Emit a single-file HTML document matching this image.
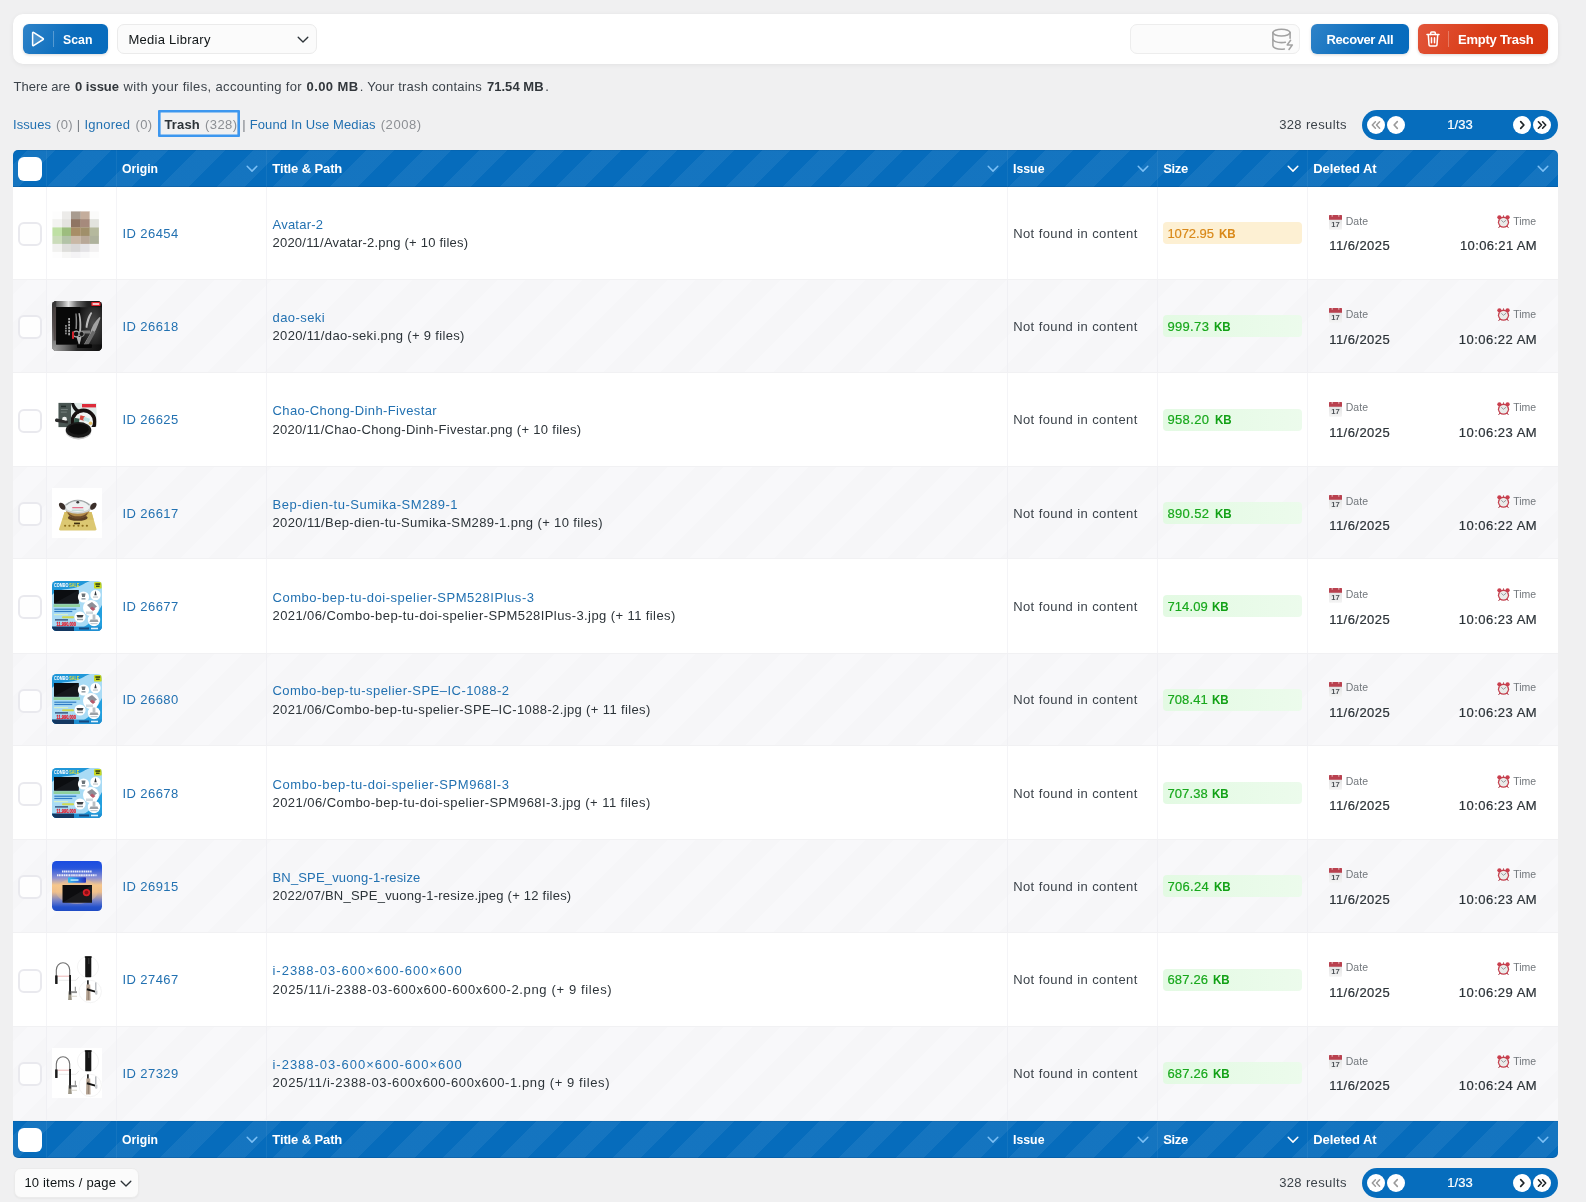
<!DOCTYPE html>
<html lang="en"><head><meta charset="utf-8"><title>Media Cleaner – Trash</title>
<style>
*{box-sizing:border-box;margin:0;padding:0}
html,body{width:1586px;height:1202px;overflow:hidden}
body{background:#f0f0f1;font-family:"Liberation Sans",sans-serif;font-size:13px;color:#3c434a;position:relative}
#root{position:absolute;left:0;top:0;width:1586px;height:1202px;will-change:transform}
i{font-style:normal;display:block;position:absolute}
.t{position:absolute;white-space:pre;z-index:3}
.b,.t b{font-weight:bold}
.m{font-weight:normal;-webkit-text-stroke:.22px currentColor}
.w{color:#fff}
.blk{color:#101517}
.lnk{color:#2271b1}
.mut{color:#8c8f94}
.pipe{color:#7a7f85}
.dk{color:#2c3338}
.dk2{color:#3c434a}
.dk3{color:#32373c}
.lab{color:#72777c}
.ot{color:#d9891a}
.gt{color:#18a81c;-webkit-text-stroke:.18px currentColor}
.b.gt{color:#12a116;-webkit-text-stroke:0}
.ot{-webkit-text-stroke:.18px currentColor}
.b.ot{-webkit-text-stroke:0}
.card{position:absolute;left:13px;top:14px;width:1545px;height:50px;background:#fff;border-radius:10px;box-shadow:0 1px 5px rgba(0,0,0,.06),0 0 2px rgba(0,0,0,.03)}
.btn{position:absolute;top:24px;height:30px;border-radius:6px;box-shadow:0 1px 3px rgba(0,0,0,.15)}
.scan{left:23px;width:85px;background:linear-gradient(120deg,#2f83c8 0%,#0b6dbd 55%,#066bbd 100%)}
.play{position:absolute;left:8px;top:7px}
.sep{top:7px;width:1px;height:16px;background:rgba(255,255,255,.28)}
.recover{left:1311px;width:98px;background:linear-gradient(120deg,#2f83c8 0%,#0b6dbd 55%,#066bbd 100%)}
.empty{left:1418px;width:130px;background:linear-gradient(120deg,#e2553a 0%,#d93c17 50%,#d6350f 100%)}
.select{position:absolute;left:117px;top:24px;width:200px;height:30px;border-radius:7px;background:#fbfbfb;border:1px solid #ebebeb}
.search{position:absolute;left:1130px;top:24px;width:170px;height:30px;border-radius:7px;background:#fbfbfb;border:1px solid #ededed}
.focus{position:absolute;left:157.500px;top:109.700px;width:82.700px;height:27.400px;box-shadow:inset 0 0 0 2.600px #3d97ef;border-radius:1px}
.pager{position:absolute;left:1362px;width:196px;height:30px;border-radius:15px;background:#066dbd}
.pager .c{top:6px;width:18px;height:18px;border-radius:9px;background:#fff}
.thead{position:absolute;z-index:2;left:13px;width:1545px;height:37px;border-radius:5px 5px 0 0;background-color:#066cbc;background-image:repeating-linear-gradient(135deg,rgba(255,255,255,0) 0,rgba(255,255,255,0) 10px,rgba(255,255,255,.058) 10px,rgba(255,255,255,.058) 30px,rgba(255,255,255,0) 30px,rgba(255,255,255,0) 40px);overflow:hidden;box-shadow:inset 0 -1px 0 rgba(0,40,90,.18),inset 0 1px 0 rgba(0,40,90,.10)}
.thead.foot{border-radius:0 0 5px 5px}
.hcb{left:5px;top:7px;width:24px;height:24px;border-radius:6px;background:#fff}
.vs{top:0;width:1px;height:37px;background:rgba(255,255,255,.055)}
.row{position:absolute;left:13px;width:1545px;height:93.4px;background:#fff;
 background-image:linear-gradient(#f4f4f7,#f4f4f7),linear-gradient(#f4f4f7,#f4f4f7),linear-gradient(#f4f4f7,#f4f4f7),linear-gradient(#f4f4f7,#f4f4f7),linear-gradient(#f4f4f7,#f4f4f7),linear-gradient(#f4f4f7,#f4f4f7);
 background-size:1px 100%;background-repeat:no-repeat;background-position:33px 0,103px 0,253px 0,994px 0,1144px 0,1294px 0}
.row.last{height:95px}
.row.alt{background-color:#f6f6f8;
 background-image:linear-gradient(#f0f0f4,#f0f0f4),linear-gradient(#f0f0f4,#f0f0f4),linear-gradient(#f0f0f4,#f0f0f4),linear-gradient(#f0f0f4,#f0f0f4),linear-gradient(#f0f0f4,#f0f0f4),linear-gradient(#f0f0f4,#f0f0f4),repeating-linear-gradient(135deg,rgba(255,255,255,.22) 0,rgba(255,255,255,.22) 20px,rgba(255,255,255,0) 20px,rgba(255,255,255,0) 40px);
 background-size:1px 100%,1px 100%,1px 100%,1px 100%,1px 100%,1px 100%,auto;background-repeat:no-repeat,no-repeat,no-repeat,no-repeat,no-repeat,no-repeat,repeat;
 box-shadow:inset 0 1px 0 #f1f1f3,inset 0 -1px 0 #f1f1f3}
.cb{left:5px;top:36px;width:24px;height:24px;border-radius:6px;background:#fefefe;border:2px solid #e9e9ee}
.th{position:absolute;left:39px;top:21.8px;width:50px;height:50px;display:block}
.th svg{display:block}
.badge{left:1150px;top:36px;width:139px;height:22px;border-radius:4px}
.badge.o{background:#fdf0d3}
.badge.g{background:linear-gradient(90deg,#e3fae3,#ecfbec)}
.ico{position:absolute;display:block;width:13px}
.ico svg{display:block}
.cal{left:1316px;top:29px}
.clk{left:1484px;top:29px}
.pp{position:absolute;left:13.500px;top:1168px;width:125.500px;height:30px;border-radius:7px;background:#fbfbfb;border:1px solid #ebebeb;box-shadow:0 1px 2px rgba(0,0,0,.04)}
</style></head>
<body>
<div id="root">
<svg width="0" height="0" style="position:absolute"><defs><linearGradient id="cg" x1="0" y1="0" x2="0" y2="1"><stop offset="0" stop-color="#dcdcdc"/><stop offset="1" stop-color="#f4f4f4"/></linearGradient></defs></svg>
<div class="card"></div>
<div class="btn scan"><svg class="play" width="14" height="16" viewBox="0 0 14 16"><path d="M1.6 1.9v12.2c0 .5.5.8.9.5l9.6-6.1c.4-.2.4-.8 0-1L2.5 1.4c-.4-.3-.9 0-.9.5z" fill="rgba(255,255,255,.18)" stroke="#fff" stroke-width="1.5" stroke-linejoin="round"/></svg><i class="sep" style="left:30px"></i></div>
<div class="select"><svg width="12" height="8" viewBox="0 0 12 8" style="position:absolute;left:179px;top:11px"><path d="M1.2 1.3L6 6.1l4.8-4.8" fill="none" stroke="#2c3338" stroke-width="1.35" stroke-linecap="round" stroke-linejoin="round"/></svg></div>
<div class="search"><svg width="24" height="23" viewBox="0 0 24 23" style="position:absolute;left:140px;top:2.5px"><g fill="none" stroke="#a2a2a2" stroke-width="1.55" stroke-linecap="round" stroke-linejoin="round"><ellipse cx="10.5" cy="4.6" rx="8.6" ry="3.4"/><path d="M1.9 4.6v13.2c0 1.9 3.8 3.4 8.6 3.4 1 0 2-.1 2.900-.2"/><path d="M19.100 4.600v5.600"/><path d="M1.9 11.200c0 1.900 3.800 3.400 8.600 3.400 1.400 0 2.700-.1 3.900-.4"/><path d="M19.600 12.300l-3.400 4.600h5.200l-3.400 4.600"/></g></svg></div>
<div class="btn recover"></div>
<div class="btn empty"><svg width="14" height="16" viewBox="0 0 14 16" style="position:absolute;left:8px;top:7px"><g fill="none" stroke="#fff" stroke-width="1.5" stroke-linecap="round" stroke-linejoin="round"><path d="M1 3.600h12"/><path d="M4.700 3.400V1.900c0-.6.400-1 1-1h2.600c.6 0 1 .4 1 1v1.500"/><path d="M2.300 3.800l.7 10c0 .700.600 1.200 1.300 1.200h5.400c.700 0 1.300-.5 1.300-1.200l.7-10"/><path d="M5.500 6.800v5M8.500 6.800v5"/></g></svg><i class="sep" style="left:30px"></i></div>
<div class="focus"></div>
<div class="pager" style="top:110px"><i class="c" style="left:5px"><svg width="18" height="18" viewBox="0 0 18 18"><path d="M8.400 5.800L5.300 9l3.100 3.200M12.600 5.800L9.500 9l3.100 3.200" fill="none" stroke="#9a9a9a" stroke-width="1.500" stroke-linecap="round" stroke-linejoin="round"/></svg></i><i class="c" style="left:25px"><svg width="18" height="18" viewBox="0 0 18 18"><path d="M10.300 5.600L7.100 9l3.200 3.400" fill="none" stroke="#9a9a9a" stroke-width="1.600" stroke-linecap="round" stroke-linejoin="round"/></svg></i><i class="c" style="left:151px"><svg width="18" height="18" viewBox="0 0 18 18"><path d="M7.700 5.600L10.900 9l-3.200 3.400" fill="none" stroke="#1d2327" stroke-width="1.700" stroke-linecap="round" stroke-linejoin="round"/></svg></i><i class="c" style="left:171px"><svg width="18" height="18" viewBox="0 0 18 18"><path d="M5.400 5.800L8.500 9l-3.100 3.200M9.600 5.800L12.700 9l-3.100 3.200" fill="none" stroke="#1d2327" stroke-width="1.600" stroke-linecap="round" stroke-linejoin="round"/></svg></i></div>
<div class="pager" style="top:1168px"><i class="c" style="left:5px"><svg width="18" height="18" viewBox="0 0 18 18"><path d="M8.400 5.800L5.300 9l3.100 3.200M12.600 5.800L9.500 9l3.100 3.200" fill="none" stroke="#9a9a9a" stroke-width="1.500" stroke-linecap="round" stroke-linejoin="round"/></svg></i><i class="c" style="left:25px"><svg width="18" height="18" viewBox="0 0 18 18"><path d="M10.300 5.600L7.100 9l3.200 3.400" fill="none" stroke="#9a9a9a" stroke-width="1.600" stroke-linecap="round" stroke-linejoin="round"/></svg></i><i class="c" style="left:151px"><svg width="18" height="18" viewBox="0 0 18 18"><path d="M7.700 5.600L10.900 9l-3.200 3.400" fill="none" stroke="#1d2327" stroke-width="1.700" stroke-linecap="round" stroke-linejoin="round"/></svg></i><i class="c" style="left:171px"><svg width="18" height="18" viewBox="0 0 18 18"><path d="M5.400 5.800L8.500 9l-3.100 3.200M9.600 5.800L12.700 9l-3.100 3.200" fill="none" stroke="#1d2327" stroke-width="1.600" stroke-linecap="round" stroke-linejoin="round"/></svg></i></div>
<div class="thead" style="top:150px"><i class="hcb"></i><i class="vs" style="left:33px"></i><i class="vs" style="left:103px"></i><i class="vs" style="left:253px"></i><i class="vs" style="left:994px"></i><i class="vs" style="left:1144px"></i><i class="vs" style="left:1294px"></i><svg width="12" height="8" viewBox="0 0 12 8" style="position:absolute;left:233px;top:15px"><path d="M1.200 1.300L6 6.100l4.800-4.800" fill="none" stroke="#7cc0f6" stroke-width="1.500" stroke-linecap="round" stroke-linejoin="round"/></svg><svg width="12" height="8" viewBox="0 0 12 8" style="position:absolute;left:974px;top:15px"><path d="M1.200 1.300L6 6.100l4.800-4.800" fill="none" stroke="#7cc0f6" stroke-width="1.500" stroke-linecap="round" stroke-linejoin="round"/></svg><svg width="12" height="8" viewBox="0 0 12 8" style="position:absolute;left:1124px;top:15px"><path d="M1.200 1.300L6 6.100l4.800-4.800" fill="none" stroke="#7cc0f6" stroke-width="1.500" stroke-linecap="round" stroke-linejoin="round"/></svg><svg width="12" height="8" viewBox="0 0 12 8" style="position:absolute;left:1274px;top:15px"><path d="M1.200 1.300L6 6.100l4.800-4.800" fill="none" stroke="#ffffff" stroke-width="1.500" stroke-linecap="round" stroke-linejoin="round"/></svg><svg width="12" height="8" viewBox="0 0 12 8" style="position:absolute;left:1524px;top:15px"><path d="M1.200 1.300L6 6.100l4.800-4.800" fill="none" stroke="#7cc0f6" stroke-width="1.500" stroke-linecap="round" stroke-linejoin="round"/></svg></div>
<div class="row" style="top:186.0px"><i class="cb"></i><span class="th"><svg width="50" height="50" viewBox="0 0 50 50"><defs><filter id="bl1" x="-5%" y="-5%" width="110%" height="110%"><feGaussianBlur stdDeviation=".55"/></filter></defs><g filter="url(#bl1)"><rect x="0.4" y="3.4" width="9.8" height="7.9" fill="#fdfdfd"/><rect x="10.0" y="3.4" width="9.2" height="7.9" fill="#ecebe9"/><rect x="19.0" y="3.4" width="9.8" height="7.9" fill="#a99c90"/><rect x="28.6" y="3.4" width="9.3" height="7.9" fill="#c4ad9c"/><rect x="37.7" y="3.4" width="9.2" height="7.9" fill="#fbfbfa"/><rect x="0.4" y="11.1" width="9.8" height="8.5" fill="#f3f3f1"/><rect x="10.0" y="11.1" width="9.2" height="8.5" fill="#e4e3df"/><rect x="19.0" y="11.1" width="9.8" height="8.5" fill="#8f7563"/><rect x="28.6" y="11.1" width="9.3" height="8.5" fill="#a68a7b"/><rect x="37.7" y="11.1" width="9.2" height="8.5" fill="#e2e3de"/><rect x="0.4" y="19.4" width="9.8" height="8.7" fill="#bfe0a4"/><rect x="10.0" y="19.4" width="9.2" height="8.7" fill="#9dbd7e"/><rect x="19.0" y="19.4" width="9.8" height="8.7" fill="#a88e66"/><rect x="28.6" y="19.4" width="9.3" height="8.7" fill="#a08f6a"/><rect x="37.7" y="19.4" width="9.2" height="8.7" fill="#b5b99d"/><rect x="0.4" y="27.9" width="9.8" height="8.2" fill="#cbdcba"/><rect x="10.0" y="27.9" width="9.2" height="8.2" fill="#b3c3a7"/><rect x="19.0" y="27.9" width="9.8" height="8.2" fill="#c9b8a6"/><rect x="28.6" y="27.9" width="9.3" height="8.2" fill="#b8a898"/><rect x="37.7" y="27.9" width="9.2" height="8.2" fill="#aeb29c"/><rect x="0.4" y="35.9" width="9.8" height="8.2" fill="#f1f1ef"/><rect x="10.0" y="35.9" width="9.2" height="8.2" fill="#dededb"/><rect x="19.0" y="35.9" width="9.8" height="8.2" fill="#d9d8d8"/><rect x="28.6" y="35.9" width="9.3" height="8.2" fill="#e4e3e6"/><rect x="37.7" y="35.9" width="9.2" height="8.2" fill="#f2f1f1"/><rect x="0.4" y="43.9" width="9.8" height="6.3" fill="#fdfdfd"/><rect x="10.0" y="43.9" width="9.2" height="6.3" fill="#f7f7f6"/><rect x="19.0" y="43.9" width="9.8" height="6.3" fill="#f4f3f5"/><rect x="28.6" y="43.9" width="9.3" height="6.3" fill="#f8f8f9"/><rect x="37.7" y="43.9" width="9.2" height="6.3" fill="#fdfdfd"/></g></svg></span><i class="badge o"></i><span class="ico cal"><svg width="13" height="15" viewBox="0 0 13 15"><rect x="0" y="0" width="13" height="14.800" rx="1" fill="url(#cg)"/><path d="M0 1c0-.6.400-1 1-1h11c.6 0 1 .4 1 1v3.800H0z" fill="#b9414f"/><rect x="2.600" y=".3" width="1.200" height="1.200" fill="#f3d9dc"/><rect x="9.200" y=".3" width="1.200" height="1.200" fill="#f3d9dc"/><text x="6.500" y="11.600" font-family="Liberation Sans, sans-serif" font-size="7.600" font-weight="bold" text-anchor="middle" fill="#4d5257">17</text></svg></span><span class="ico clk"><svg width="13" height="13" viewBox="0 0 13 13"><circle cx="2.400" cy="2.300" r="2.100" fill="#cb3f4e"/><circle cx="10.600" cy="2.300" r="2.100" fill="#cb3f4e"/><path d="M6.500 .4v1.500" stroke="#a93341" stroke-width=".9"/><path d="M2.800 11.300l-1 1.300M10.200 11.300l1 1.300" stroke="#a93341" stroke-width="1" stroke-linecap="round"/><circle cx="6.500" cy="7.200" r="5.600" fill="#c4404e"/><circle cx="6.500" cy="7.200" r="4.300" fill="#ebebe9"/><path d="M4.600 5.600l1.900 1.700 2.300-1.900" fill="none" stroke="#8d9096" stroke-width=".9" stroke-linecap="round" stroke-linejoin="round"/></svg></span></div>
<div class="row alt" style="top:279.3px"><i class="cb"></i><span class="th"><svg width="50" height="50" viewBox="0 0 50 50"><defs><clipPath id="ck"><rect width="50" height="50" rx="4.500"/></clipPath><linearGradient id="k1" x1="0" y1="0" x2="1" y2="0"><stop offset="0" stop-color="#3a3a3a"/><stop offset=".2" stop-color="#8c8c8c"/><stop offset=".33" stop-color="#e2e2e2"/><stop offset=".5" stop-color="#6a6a6a"/><stop offset=".7" stop-color="#262626"/><stop offset="1" stop-color="#101010"/></linearGradient><linearGradient id="k2" x1="0" y1="0" x2="0" y2="1"><stop offset="0" stop-color="#333"/><stop offset=".5" stop-color="#5b5555"/><stop offset=".8" stop-color="#7f7f7f"/><stop offset="1" stop-color="#a0a0a0"/></linearGradient><radialGradient id="k3" cx=".6" cy=".45" r=".7"><stop offset="0" stop-color="#4c4c4c"/><stop offset=".6" stop-color="#2a2a2a"/><stop offset="1" stop-color="#121212"/></radialGradient><linearGradient id="k4" x1="0" y1="0" x2="1" y2="0"><stop offset="0" stop-color="#a4a4a4"/><stop offset=".25" stop-color="#6f6f6f"/><stop offset=".5" stop-color="#2c2c2c"/><stop offset="1" stop-color="#0e0e0e"/></linearGradient></defs><g clip-path="url(#ck)"><rect width="50" height="50" fill="#262626"/><rect x="28" y="5" width="22" height="40" fill="url(#k3)"/><rect x="0" y="0" width="50" height="6.200" fill="url(#k1)"/><rect x="0" y="43.500" width="50" height="6.500" fill="url(#k4)"/><rect x="0" y="0" width="4.200" height="50" fill="url(#k2)"/><rect x="4.100" y="6" width="24" height="37.500" fill="#080808"/><rect x="1.600" y="6.500" width="2.300" height="33" fill="#4d4442" opacity=".8"/><path d="M27.600 12c1.700 4.500 2.200 12.500 1.300 20l-1.900.2c.8-7 .4-14.200-.6-20z" fill="#b5b5b5"/><path d="M23.300 12.500l1.300 0c.7 5 .7 10 .3 15.500l-1.500 0c.4-5.500.3-10.500-.1-15.500z" fill="#8a8a8a"/><path d="M39 11c-3 3.500-5 9.500-5.400 15.500l1.700.4c1.100-6 2.800-11 4.900-14.800z" fill="#bdbdbd"/><path d="M47.500 16c-4.800 4.500-8.300 10.500-9.800 17.500l-6.700 11.500 3.200.5 5.300-9.500c3-3.500 6-10.500 9-19.300z" fill="#a3a3a3"/><path d="M40.300 29.500l3.200 1.700-7.200 12.800-3.800-1z" fill="#6a6a6a"/><path d="M29.500 29.500h8.500v3h-8.500z" fill="#7d7d7d"/><circle cx="24.200" cy="33" r="2.900" fill="#111" stroke="#a5a5a5" stroke-width="1.100"/><circle cx="29.600" cy="33" r="2.600" fill="#1a1a1a" stroke="#9a9a9a" stroke-width="1"/><path d="M24.500 36l2.700 9 2.300-9z" fill="#b0b0b0"/><rect x="20" y="30.500" width="2" height="7.300" fill="#d3222a"/><g fill="#b9b9b9"><rect x="16.300" y="17" width="1.600" height="2.300"/><rect x="16.300" y="20" width="1.600" height="2.300"/><rect x="16.300" y="23" width="1.600" height="2.300"/><rect x="16.300" y="26" width="1.600" height="2.300"/><rect x="16.300" y="29" width="1.600" height="2.300"/><rect x="16.300" y="32" width="1.600" height="2.300"/><rect x="13.300" y="24" width="1.300" height="1.800"/><rect x="13.300" y="26.500" width="1.300" height="1.800"/><rect x="13.300" y="29" width="1.300" height="1.800"/><rect x="13.300" y="31.500" width="1.300" height="1.800"/></g><rect x="25" y="43.300" width="15" height="3.700" rx="1" fill="#060606"/><rect x="39.300" y="1" width="9.200" height="4" rx=".8" fill="#e0222c"/><rect x="40.600" y="2" width="6.600" height="2" fill="#f3c4c6"/></g></svg></span><i class="badge g"></i><span class="ico cal"><svg width="13" height="15" viewBox="0 0 13 15"><rect x="0" y="0" width="13" height="14.800" rx="1" fill="url(#cg)"/><path d="M0 1c0-.6.400-1 1-1h11c.6 0 1 .4 1 1v3.800H0z" fill="#b9414f"/><rect x="2.600" y=".3" width="1.200" height="1.200" fill="#f3d9dc"/><rect x="9.200" y=".3" width="1.200" height="1.200" fill="#f3d9dc"/><text x="6.500" y="11.600" font-family="Liberation Sans, sans-serif" font-size="7.600" font-weight="bold" text-anchor="middle" fill="#4d5257">17</text></svg></span><span class="ico clk"><svg width="13" height="13" viewBox="0 0 13 13"><circle cx="2.400" cy="2.300" r="2.100" fill="#cb3f4e"/><circle cx="10.600" cy="2.300" r="2.100" fill="#cb3f4e"/><path d="M6.500 .4v1.500" stroke="#a93341" stroke-width=".9"/><path d="M2.800 11.300l-1 1.300M10.200 11.300l1 1.300" stroke="#a93341" stroke-width="1" stroke-linecap="round"/><circle cx="6.500" cy="7.200" r="5.600" fill="#c4404e"/><circle cx="6.500" cy="7.200" r="4.300" fill="#ebebe9"/><path d="M4.600 5.600l1.900 1.700 2.300-1.900" fill="none" stroke="#8d9096" stroke-width=".9" stroke-linecap="round" stroke-linejoin="round"/></svg></span></div>
<div class="row" style="top:372.7px"><i class="cb"></i><span class="th"><svg width="50" height="50" viewBox="0 0 50 50"><defs><clipPath id="cp3"><rect x="19" y="8.200" width="25.500" height="24.200"/></clipPath></defs><g transform="translate(0 .7)"><rect x="6.500" y="8.200" width="38" height="24.200" fill="#dfe9e7"/><rect x="6.500" y="8.200" width="12.500" height="24.200" fill="#4a5653"/><circle cx="12.500" cy="24.500" r="2.400" fill="#eef1f0"/><rect x="9" y="11" width="5" height="1.500" fill="#222c2a"/><rect x="8.800" y="14.500" width="7" height=".8" fill="#7d8886"/><rect x="8.800" y="17" width="6" height=".8" fill="#7d8886"/><rect x="30" y="9.300" width="14" height="3.400" fill="#dd2b3a"/><g clip-path="url(#cp3)"><circle cx="31.500" cy="27" r="11.300" fill="#f1f4f3" stroke="#17100f" stroke-width="3.600"/><path d="M25.500 19.500l9 2.500-2.500 8.500-8.500-2z" fill="#e8eceb"/><path d="M22.500 23l5 1-1 7-5-1z" fill="#36594c"/><path d="M28.500 20.500l4.500 1.200-1.200 4.300-4.300-1.200z" fill="#d4463c"/><circle cx="38.500" cy="28.500" r="1.800" fill="#e7c26a"/><path d="M32 22l6 2-1 3.500-6-2z" fill="#b9dfe0"/></g><path d="M19 8.300l3-.1c1 3 2.600 5 5 6.800l-2.600 2.200c-2.700-1.700-4.400-4.700-5.400-8.900z" fill="#151515"/><path d="M3 25.500c0-1.200 1-1.800 2.200-1.600l11 2.600-.6 2.400-11-1.600c-1-.2-1.600-.9-1.600-1.800z" fill="#2b2b2b"/><ellipse cx="26.500" cy="36.600" rx="12.800" ry="8.200" fill="#c9c9c9"/><ellipse cx="26.500" cy="35.200" rx="12.800" ry="7.800" fill="#1a1a1a"/><ellipse cx="26.500" cy="34.500" rx="10.200" ry="5.500" fill="#0c0c0c"/></g></svg></span><i class="badge g"></i><span class="ico cal"><svg width="13" height="15" viewBox="0 0 13 15"><rect x="0" y="0" width="13" height="14.800" rx="1" fill="url(#cg)"/><path d="M0 1c0-.6.400-1 1-1h11c.6 0 1 .4 1 1v3.800H0z" fill="#b9414f"/><rect x="2.600" y=".3" width="1.200" height="1.200" fill="#f3d9dc"/><rect x="9.200" y=".3" width="1.200" height="1.200" fill="#f3d9dc"/><text x="6.500" y="11.600" font-family="Liberation Sans, sans-serif" font-size="7.600" font-weight="bold" text-anchor="middle" fill="#4d5257">17</text></svg></span><span class="ico clk"><svg width="13" height="13" viewBox="0 0 13 13"><circle cx="2.400" cy="2.300" r="2.100" fill="#cb3f4e"/><circle cx="10.600" cy="2.300" r="2.100" fill="#cb3f4e"/><path d="M6.500 .4v1.500" stroke="#a93341" stroke-width=".9"/><path d="M2.800 11.300l-1 1.300M10.200 11.300l1 1.300" stroke="#a93341" stroke-width="1" stroke-linecap="round"/><circle cx="6.500" cy="7.200" r="5.600" fill="#c4404e"/><circle cx="6.500" cy="7.200" r="4.300" fill="#ebebe9"/><path d="M4.600 5.600l1.900 1.700 2.300-1.900" fill="none" stroke="#8d9096" stroke-width=".9" stroke-linecap="round" stroke-linejoin="round"/></svg></span></div>
<div class="row alt" style="top:466.0px"><i class="cb"></i><span class="th"><svg width="50" height="50" viewBox="0 0 50 50"><rect width="50" height="50" fill="#fff"/><g transform="translate(25 0) scale(1.1 .975) translate(-25.300 0)"><path d="M14 24.500h24.500l4.500 17.500c.2.900-.3 1.500-1.200 1.500H10.200c-.900 0-1.400-.6-1.200-1.500z" fill="#dcc872"/><path d="M14 24.500h24.500l2 8H12z" fill="#d6be63"/><ellipse cx="26" cy="30.500" rx="9" ry="3.200" fill="#5a3e22"/><path d="M15 21.500h22c-.5 5.500-4.500 9.500-11 9.500s-10.500-4-11-9.500z" fill="#b48d4b"/><path d="M17 25c2.500 3 5.500 4 9 4s6.500-1 9-4c-1 4-4.500 6.500-9 6.500s-8-2.500-9-6.500z" fill="#6b4a2a"/><ellipse cx="26" cy="19.800" rx="13" ry="6.600" fill="#cfd3d3"/><ellipse cx="26" cy="19.300" rx="11" ry="5.200" fill="#eef1f1"/><path d="M15.500 17.500c3-3.500 7-5 10.500-5s7.500 1.500 10.500 5" fill="none" stroke="#9ea4a4" stroke-width="1.100"/><rect x="21" y="19.500" width="10" height="1.300" fill="#e4708a"/><rect x="20.500" y="22.200" width="11" height="1.100" fill="#b9d7cf"/><circle cx="26" cy="14.600" r="1.300" fill="#3a3a3a"/><path d="M9.500 15.500c1.600-.8 3.600.2 4.600 2.200s.8 4-.2 4.600c-1.600.4-3.200-.8-4.200-2.600s-1.200-3.400-.2-4.200z" fill="#3b2f2a"/><path d="M42.500 15.500c-1.600-.8-3.600.2-4.600 2.200s-.8 4 .2 4.600c1.600.4 3.200-.8 4.200-2.600s1.200-3.400.2-4.200z" fill="#3b2f2a"/><rect x="22.600" y="35.500" width="5.400" height="1.700" fill="#3d2c12"/><g fill="#8e6f1d"><circle cx="14.500" cy="38.700" r="1"/><circle cx="18.400" cy="38.700" r="1"/><circle cx="22.400" cy="38.700" r="1"/><circle cx="26.600" cy="38.700" r="1"/><circle cx="30.400" cy="38.700" r="1"/><circle cx="34.300" cy="38.700" r="1"/></g></g></svg></span><i class="badge g"></i><span class="ico cal"><svg width="13" height="15" viewBox="0 0 13 15"><rect x="0" y="0" width="13" height="14.800" rx="1" fill="url(#cg)"/><path d="M0 1c0-.6.400-1 1-1h11c.6 0 1 .4 1 1v3.800H0z" fill="#b9414f"/><rect x="2.600" y=".3" width="1.200" height="1.200" fill="#f3d9dc"/><rect x="9.200" y=".3" width="1.200" height="1.200" fill="#f3d9dc"/><text x="6.500" y="11.600" font-family="Liberation Sans, sans-serif" font-size="7.600" font-weight="bold" text-anchor="middle" fill="#4d5257">17</text></svg></span><span class="ico clk"><svg width="13" height="13" viewBox="0 0 13 13"><circle cx="2.400" cy="2.300" r="2.100" fill="#cb3f4e"/><circle cx="10.600" cy="2.300" r="2.100" fill="#cb3f4e"/><path d="M6.500 .4v1.500" stroke="#a93341" stroke-width=".9"/><path d="M2.800 11.300l-1 1.300M10.200 11.300l1 1.300" stroke="#a93341" stroke-width="1" stroke-linecap="round"/><circle cx="6.500" cy="7.200" r="5.600" fill="#c4404e"/><circle cx="6.500" cy="7.200" r="4.300" fill="#ebebe9"/><path d="M4.600 5.600l1.900 1.700 2.300-1.900" fill="none" stroke="#8d9096" stroke-width=".9" stroke-linecap="round" stroke-linejoin="round"/></svg></span></div>
<div class="row" style="top:559.3px"><i class="cb"></i><span class="th"><svg width="50" height="50" viewBox="0 0 50 50"><defs><clipPath id="cc"><rect width="50" height="50" rx="4.500"/></clipPath></defs><g clip-path="url(#cc)"><rect width="50" height="50" fill="#a9dbf5"/><path d="M0 0h38c-7 2.500-10 6.500-19 7.500S4 9.500 0 14z" fill="#2097d8"/><path d="M50 24v26H18c9-1 15-3.500 20.500-9S47 29 50 24z" fill="#239fde"/><rect x="2" y="9" width="24.600" height="13.600" fill="#0b0d10"/><path d="M2 22.600L26.600 9v13.600z" fill="#15181c"/><rect x="1.600" y="23.200" width="26.400" height="2.800" fill="#8fcf9c"/><rect x="2.300" y="27.600" width="22" height="1.200" fill="#2f7cc4"/><rect x="2.300" y="29.900" width="18" height="1.200" fill="#2f7cc4"/><rect x="2" y="33" width="14" height="1.200" fill="#d6efc8"/><rect x="10" y="35.200" width="12" height="2" rx="1" fill="#cfd850"/><rect x="3" y="38.300" width="13" height="1.200" fill="#1d3b6a"/><circle cx="31.500" cy="16" r="5.600" fill="#fff"/><circle cx="43.500" cy="14" r="5.200" fill="#fff"/><circle cx="39" cy="27" r="8" fill="#fff"/><circle cx="28" cy="36" r="5.600" fill="#fff"/><circle cx="42" cy="39" r="6.200" fill="#fff"/><path d="M29.500 12.500h4l-.6 3.500h-2.800z" fill="#6d7479"/><rect x="29.500" y="17" width="4" height="1.600" fill="#9aa3a9"/><path d="M43.500 9.500l1.200 4.800h-2.400z" fill="#2f343a"/><rect x="41" y="15.600" width="5" height=".9" fill="#aab4ba"/><path d="M35 24l5-3 5 4.500-5 3.500z" fill="#8d8f98"/><path d="M40 25.500l3.500 2.500-2.500 2-3-2.500z" fill="#b55a6c"/><rect x="34" y="30.500" width="7" height="2.600" fill="#cfd8de"/><path d="M24.500 34h7l-1 2.500h-5z" fill="#3c4045"/><rect x="25" y="37.800" width="6" height="1.400" fill="#9aa3a9"/><rect x="40.600" y="33.500" width="2.800" height="5" fill="#b9c0c5"/><path d="M38.500 38.500h7l1 2.500h-9z" fill="#9aa0a6"/><rect x="38.500" y="42" width="7" height="1.200" fill="#c4ccd2"/><rect x="0" y="45.600" width="50" height="4.400" fill="#1f8fd2"/><rect x="0" y="45.600" width="22" height="4.400" fill="#143761"/><rect x="27" y="46.500" width="10" height="2" fill="#174a80"/><rect x="39" y="46.700" width="7" height="1.600" fill="#dff2fc"/><rect x="42" y="1" width="7.600" height="6.600" rx="1.200" fill="#c9d821"/><rect x="43.400" y="2.300" width="4.800" height="1.500" fill="#2b3a12"/><rect x="44" y="4.600" width="3.600" height="1.300" fill="#2b3a12"/><text x="2" y="6.200" font-family="Liberation Sans, sans-serif" font-weight="bold" font-size="5.200" fill="#fff" textLength="14.500" lengthAdjust="spacingAndGlyphs">COMBO</text><text x="17.200" y="6.200" font-family="Liberation Sans, sans-serif" font-weight="bold" font-size="5.200" fill="#e9e23a" textLength="10" lengthAdjust="spacingAndGlyphs">SALE</text><text x="4.500" y="44.600" font-family="Liberation Sans, sans-serif" font-weight="bold" font-size="5.600" fill="#e0202f" stroke="#e0202f" stroke-width=".3" textLength="19.500" lengthAdjust="spacingAndGlyphs">11.990.000</text></g></svg></span><i class="badge g"></i><span class="ico cal"><svg width="13" height="15" viewBox="0 0 13 15"><rect x="0" y="0" width="13" height="14.800" rx="1" fill="url(#cg)"/><path d="M0 1c0-.6.400-1 1-1h11c.6 0 1 .4 1 1v3.800H0z" fill="#b9414f"/><rect x="2.600" y=".3" width="1.200" height="1.200" fill="#f3d9dc"/><rect x="9.200" y=".3" width="1.200" height="1.200" fill="#f3d9dc"/><text x="6.500" y="11.600" font-family="Liberation Sans, sans-serif" font-size="7.600" font-weight="bold" text-anchor="middle" fill="#4d5257">17</text></svg></span><span class="ico clk"><svg width="13" height="13" viewBox="0 0 13 13"><circle cx="2.400" cy="2.300" r="2.100" fill="#cb3f4e"/><circle cx="10.600" cy="2.300" r="2.100" fill="#cb3f4e"/><path d="M6.500 .4v1.500" stroke="#a93341" stroke-width=".9"/><path d="M2.800 11.300l-1 1.300M10.200 11.300l1 1.300" stroke="#a93341" stroke-width="1" stroke-linecap="round"/><circle cx="6.500" cy="7.200" r="5.600" fill="#c4404e"/><circle cx="6.500" cy="7.200" r="4.300" fill="#ebebe9"/><path d="M4.600 5.600l1.900 1.700 2.300-1.900" fill="none" stroke="#8d9096" stroke-width=".9" stroke-linecap="round" stroke-linejoin="round"/></svg></span></div>
<div class="row alt" style="top:652.7px"><i class="cb"></i><span class="th"><svg width="50" height="50" viewBox="0 0 50 50"><defs><clipPath id="cc6"><rect width="50" height="50" rx="4.500"/></clipPath></defs><g clip-path="url(#cc6)"><rect width="50" height="50" fill="#a9dbf5"/><path d="M0 0h38c-7 2.500-10 6.500-19 7.500S4 9.500 0 14z" fill="#2097d8"/><path d="M50 24v26H18c9-1 15-3.500 20.500-9S47 29 50 24z" fill="#239fde"/><rect x="2" y="9" width="24.600" height="13.600" fill="#0b0d10"/><path d="M2 22.600L26.600 9v13.600z" fill="#15181c"/><rect x="1.600" y="23.200" width="26.400" height="2.800" fill="#8fcf9c"/><rect x="2.300" y="27.600" width="22" height="1.200" fill="#2f7cc4"/><rect x="2.300" y="29.900" width="18" height="1.200" fill="#2f7cc4"/><rect x="2" y="33" width="14" height="1.200" fill="#d6efc8"/><rect x="10" y="35.200" width="12" height="2" rx="1" fill="#cfd850"/><rect x="3" y="38.300" width="13" height="1.200" fill="#1d3b6a"/><circle cx="31.500" cy="16" r="5.600" fill="#fff"/><circle cx="43.500" cy="14" r="5.200" fill="#fff"/><circle cx="39" cy="27" r="8" fill="#fff"/><circle cx="28" cy="36" r="5.600" fill="#fff"/><circle cx="42" cy="39" r="6.200" fill="#fff"/><path d="M29.500 12.500h4l-.6 3.500h-2.800z" fill="#6d7479"/><rect x="29.500" y="17" width="4" height="1.600" fill="#9aa3a9"/><path d="M43.500 9.500l1.200 4.800h-2.400z" fill="#2f343a"/><rect x="41" y="15.600" width="5" height=".9" fill="#aab4ba"/><path d="M35 24l5-3 5 4.500-5 3.500z" fill="#8d8f98"/><path d="M40 25.500l3.500 2.500-2.500 2-3-2.500z" fill="#b55a6c"/><rect x="34" y="30.500" width="7" height="2.600" fill="#cfd8de"/><path d="M24.500 34h7l-1 2.500h-5z" fill="#3c4045"/><rect x="25" y="37.800" width="6" height="1.400" fill="#9aa3a9"/><rect x="40.600" y="33.500" width="2.800" height="5" fill="#b9c0c5"/><path d="M38.500 38.500h7l1 2.500h-9z" fill="#9aa0a6"/><rect x="38.500" y="42" width="7" height="1.200" fill="#c4ccd2"/><rect x="0" y="45.600" width="50" height="4.400" fill="#1f8fd2"/><rect x="0" y="45.600" width="22" height="4.400" fill="#143761"/><rect x="27" y="46.500" width="10" height="2" fill="#174a80"/><rect x="39" y="46.700" width="7" height="1.600" fill="#dff2fc"/><rect x="42" y="1" width="7.600" height="6.600" rx="1.200" fill="#c9d821"/><rect x="43.400" y="2.300" width="4.800" height="1.500" fill="#2b3a12"/><rect x="44" y="4.600" width="3.600" height="1.300" fill="#2b3a12"/><text x="2" y="6.200" font-family="Liberation Sans, sans-serif" font-weight="bold" font-size="5.200" fill="#fff" textLength="14.500" lengthAdjust="spacingAndGlyphs">COMBO</text><text x="17.200" y="6.200" font-family="Liberation Sans, sans-serif" font-weight="bold" font-size="5.200" fill="#e9e23a" textLength="10" lengthAdjust="spacingAndGlyphs">SALE</text><text x="4.500" y="44.600" font-family="Liberation Sans, sans-serif" font-weight="bold" font-size="5.600" fill="#e0202f" stroke="#e0202f" stroke-width=".3" textLength="19.500" lengthAdjust="spacingAndGlyphs">11.990.000</text></g></svg></span><i class="badge g"></i><span class="ico cal"><svg width="13" height="15" viewBox="0 0 13 15"><rect x="0" y="0" width="13" height="14.800" rx="1" fill="url(#cg)"/><path d="M0 1c0-.6.400-1 1-1h11c.6 0 1 .4 1 1v3.800H0z" fill="#b9414f"/><rect x="2.600" y=".3" width="1.200" height="1.200" fill="#f3d9dc"/><rect x="9.200" y=".3" width="1.200" height="1.200" fill="#f3d9dc"/><text x="6.500" y="11.600" font-family="Liberation Sans, sans-serif" font-size="7.600" font-weight="bold" text-anchor="middle" fill="#4d5257">17</text></svg></span><span class="ico clk"><svg width="13" height="13" viewBox="0 0 13 13"><circle cx="2.400" cy="2.300" r="2.100" fill="#cb3f4e"/><circle cx="10.600" cy="2.300" r="2.100" fill="#cb3f4e"/><path d="M6.500 .4v1.500" stroke="#a93341" stroke-width=".9"/><path d="M2.800 11.300l-1 1.300M10.200 11.300l1 1.300" stroke="#a93341" stroke-width="1" stroke-linecap="round"/><circle cx="6.500" cy="7.200" r="5.600" fill="#c4404e"/><circle cx="6.500" cy="7.200" r="4.300" fill="#ebebe9"/><path d="M4.600 5.600l1.900 1.700 2.300-1.900" fill="none" stroke="#8d9096" stroke-width=".9" stroke-linecap="round" stroke-linejoin="round"/></svg></span></div>
<div class="row" style="top:746.0px"><i class="cb"></i><span class="th"><svg width="50" height="50" viewBox="0 0 50 50"><defs><clipPath id="cc7"><rect width="50" height="50" rx="4.500"/></clipPath></defs><g clip-path="url(#cc7)"><rect width="50" height="50" fill="#a9dbf5"/><path d="M0 0h38c-7 2.500-10 6.500-19 7.500S4 9.500 0 14z" fill="#2097d8"/><path d="M50 24v26H18c9-1 15-3.500 20.500-9S47 29 50 24z" fill="#239fde"/><rect x="2" y="9" width="24.600" height="13.600" fill="#0b0d10"/><path d="M2 22.600L26.600 9v13.600z" fill="#15181c"/><rect x="1.600" y="23.200" width="26.400" height="2.800" fill="#8fcf9c"/><rect x="2.300" y="27.600" width="22" height="1.200" fill="#2f7cc4"/><rect x="2.300" y="29.900" width="18" height="1.200" fill="#2f7cc4"/><rect x="2" y="33" width="14" height="1.200" fill="#d6efc8"/><rect x="10" y="35.200" width="12" height="2" rx="1" fill="#cfd850"/><rect x="3" y="38.300" width="13" height="1.200" fill="#1d3b6a"/><circle cx="31.500" cy="16" r="5.600" fill="#fff"/><circle cx="43.500" cy="14" r="5.200" fill="#fff"/><circle cx="39" cy="27" r="8" fill="#fff"/><circle cx="28" cy="36" r="5.600" fill="#fff"/><circle cx="42" cy="39" r="6.200" fill="#fff"/><path d="M29.500 12.500h4l-.6 3.500h-2.800z" fill="#6d7479"/><rect x="29.500" y="17" width="4" height="1.600" fill="#9aa3a9"/><path d="M43.500 9.500l1.200 4.800h-2.400z" fill="#2f343a"/><rect x="41" y="15.600" width="5" height=".9" fill="#aab4ba"/><path d="M35 24l5-3 5 4.500-5 3.500z" fill="#8d8f98"/><path d="M40 25.500l3.500 2.500-2.500 2-3-2.500z" fill="#b55a6c"/><rect x="34" y="30.500" width="7" height="2.600" fill="#cfd8de"/><path d="M24.500 34h7l-1 2.500h-5z" fill="#3c4045"/><rect x="25" y="37.800" width="6" height="1.400" fill="#9aa3a9"/><rect x="40.600" y="33.500" width="2.800" height="5" fill="#b9c0c5"/><path d="M38.500 38.500h7l1 2.500h-9z" fill="#9aa0a6"/><rect x="38.500" y="42" width="7" height="1.200" fill="#c4ccd2"/><rect x="0" y="45.600" width="50" height="4.400" fill="#1f8fd2"/><rect x="0" y="45.600" width="22" height="4.400" fill="#143761"/><rect x="27" y="46.500" width="10" height="2" fill="#174a80"/><rect x="39" y="46.700" width="7" height="1.600" fill="#dff2fc"/><rect x="42" y="1" width="7.600" height="6.600" rx="1.200" fill="#c9d821"/><rect x="43.400" y="2.300" width="4.800" height="1.500" fill="#2b3a12"/><rect x="44" y="4.600" width="3.600" height="1.300" fill="#2b3a12"/><text x="2" y="6.200" font-family="Liberation Sans, sans-serif" font-weight="bold" font-size="5.200" fill="#fff" textLength="14.500" lengthAdjust="spacingAndGlyphs">COMBO</text><text x="17.200" y="6.200" font-family="Liberation Sans, sans-serif" font-weight="bold" font-size="5.200" fill="#e9e23a" textLength="10" lengthAdjust="spacingAndGlyphs">SALE</text><text x="4.500" y="44.600" font-family="Liberation Sans, sans-serif" font-weight="bold" font-size="5.600" fill="#e0202f" stroke="#e0202f" stroke-width=".3" textLength="19.500" lengthAdjust="spacingAndGlyphs">11.990.000</text></g></svg></span><i class="badge g"></i><span class="ico cal"><svg width="13" height="15" viewBox="0 0 13 15"><rect x="0" y="0" width="13" height="14.800" rx="1" fill="url(#cg)"/><path d="M0 1c0-.6.400-1 1-1h11c.6 0 1 .4 1 1v3.800H0z" fill="#b9414f"/><rect x="2.600" y=".3" width="1.200" height="1.200" fill="#f3d9dc"/><rect x="9.200" y=".3" width="1.200" height="1.200" fill="#f3d9dc"/><text x="6.500" y="11.600" font-family="Liberation Sans, sans-serif" font-size="7.600" font-weight="bold" text-anchor="middle" fill="#4d5257">17</text></svg></span><span class="ico clk"><svg width="13" height="13" viewBox="0 0 13 13"><circle cx="2.400" cy="2.300" r="2.100" fill="#cb3f4e"/><circle cx="10.600" cy="2.300" r="2.100" fill="#cb3f4e"/><path d="M6.500 .4v1.500" stroke="#a93341" stroke-width=".9"/><path d="M2.800 11.300l-1 1.300M10.200 11.300l1 1.300" stroke="#a93341" stroke-width="1" stroke-linecap="round"/><circle cx="6.500" cy="7.200" r="5.600" fill="#c4404e"/><circle cx="6.500" cy="7.200" r="4.300" fill="#ebebe9"/><path d="M4.600 5.600l1.900 1.700 2.300-1.900" fill="none" stroke="#8d9096" stroke-width=".9" stroke-linecap="round" stroke-linejoin="round"/></svg></span></div>
<div class="row alt" style="top:839.3px"><i class="cb"></i><span class="th"><svg width="50" height="50" viewBox="0 0 50 50"><defs><clipPath id="c8"><rect width="50" height="50" rx="4.500"/></clipPath><linearGradient id="g8" x1="0" y1="0" x2="0" y2="1"><stop offset="0" stop-color="#1a4ce0"/><stop offset=".14" stop-color="#2655dd"/><stop offset=".34" stop-color="#8f92d2"/><stop offset=".48" stop-color="#f6c78c"/><stop offset=".62" stop-color="#efbe8a"/><stop offset=".8" stop-color="#6f7fca"/><stop offset=".92" stop-color="#2452cc"/><stop offset="1" stop-color="#1f4bc4"/></linearGradient><linearGradient id="l8" x1="0" y1="0" x2="1" y2="0"><stop offset="0" stop-color="#2ec0ee"/><stop offset=".55" stop-color="#2d6fe0"/><stop offset="1" stop-color="#2430b8"/></linearGradient></defs><g clip-path="url(#c8)"><rect width="50" height="50" fill="url(#g8)"/><ellipse cx="25" cy="30" rx="21" ry="13" fill="#f7c98c" opacity=".35"/><path d="M10 10.500h30" stroke="#fff" stroke-width="2" stroke-dasharray="1.400 .5 1.100 .4 1.600 .5" opacity=".85"/><path d="M5 14.200h39.500" stroke="#fff" stroke-width="2" stroke-dasharray="1.200 .5 1.500 .4 .9 .4 1.300 .6" opacity=".85"/><rect x="16" y="16.300" width="18" height="5.400" rx=".8" fill="url(#l8)"/><rect x="18.500" y="18.300" width="8" height="1.500" fill="#bff0ff"/><rect x="10.500" y="24" width="29.500" height="17.500" fill="#0d0d0f"/><path d="M10.500 41.500L40 24v17.500z" fill="#1a1a1c"/><circle cx="34.500" cy="31.600" r="3.700" fill="#d81f26"/><circle cx="34.500" cy="31.600" r="2" fill="#8a0f14"/></g></svg></span><i class="badge g"></i><span class="ico cal"><svg width="13" height="15" viewBox="0 0 13 15"><rect x="0" y="0" width="13" height="14.800" rx="1" fill="url(#cg)"/><path d="M0 1c0-.6.400-1 1-1h11c.6 0 1 .4 1 1v3.800H0z" fill="#b9414f"/><rect x="2.600" y=".3" width="1.200" height="1.200" fill="#f3d9dc"/><rect x="9.200" y=".3" width="1.200" height="1.200" fill="#f3d9dc"/><text x="6.500" y="11.600" font-family="Liberation Sans, sans-serif" font-size="7.600" font-weight="bold" text-anchor="middle" fill="#4d5257">17</text></svg></span><span class="ico clk"><svg width="13" height="13" viewBox="0 0 13 13"><circle cx="2.400" cy="2.300" r="2.100" fill="#cb3f4e"/><circle cx="10.600" cy="2.300" r="2.100" fill="#cb3f4e"/><path d="M6.500 .4v1.500" stroke="#a93341" stroke-width=".9"/><path d="M2.800 11.300l-1 1.300M10.200 11.300l1 1.300" stroke="#a93341" stroke-width="1" stroke-linecap="round"/><circle cx="6.500" cy="7.200" r="5.600" fill="#c4404e"/><circle cx="6.500" cy="7.200" r="4.300" fill="#ebebe9"/><path d="M4.600 5.600l1.900 1.700 2.300-1.900" fill="none" stroke="#8d9096" stroke-width=".9" stroke-linecap="round" stroke-linejoin="round"/></svg></span></div>
<div class="row" style="top:932.7px"><i class="cb"></i><span class="th"><svg width="50" height="50" viewBox="0 0 50 50"><circle cx="36" cy="13" r="10.600" fill="none" stroke="#ececec" stroke-width=".6"/><circle cx="38.200" cy="37.500" r="11.200" fill="none" stroke="#ececec" stroke-width=".6"/><path d="M4.300 21.500V16c0-4.200 3-7.300 6.700-7.300s6.700 3.100 6.700 7.300v5.500" fill="none" stroke="#6f6f6f" stroke-width="1.100"/><path d="M5.500 22.200h12" stroke="#e7a3a3" stroke-width=".8"/><path d="M7 26.300h17l3-3.500" fill="none" stroke="#dcdcdc" stroke-width=".6"/><rect x="3.100" y="21.300" width="2.500" height="8.800" rx=".6" fill="#1c1c1c"/><rect x="17.100" y="21" width="1.900" height="16.800" fill="#1a1a1a"/><path d="M16.700 37.500h2.500l.6 8.600h-3.700z" fill="#9c9687"/><rect x="16.900" y="37" width="2.300" height="3.600" fill="#3a3a3a"/><rect x="19" y="37.200" width="6" height="1.900" fill="#8e8e8e"/><rect x="22.800" y="32.700" width="1" height="4.800" fill="#8a8a8a"/><rect x="19.500" y="41.800" width="5.500" height=".8" fill="#cfcabf"/><rect x="33.200" y="2.600" width="6.100" height="20.600" rx=".8" fill="#161616"/><rect x="32.800" y="2.300" width="6.900" height="1.300" fill="#0c0c0c"/><rect x="36.400" y="4" width=".9" height="6" fill="#444"/><rect x="35.100" y="26.300" width="1.600" height="4.600" fill="#141414"/><path d="M34.400 30.600h3.800l.4 15.900h-4.600z" fill="#b7a595"/><rect x="35.900" y="33" width=".8" height="13" fill="#8d7c6d"/><path d="M35 34.200l8.500 2.500-.5 1.900-8.300-2.300z" fill="#121212"/><rect x="43" y="28.400" width="1.500" height="7.600" fill="#b9bcc0"/><path d="M43 36.400h2.400v3.600c0 .6-.6.900-1.200.7l-1.200-.5z" fill="#c6c9cc"/></svg></span><i class="badge g"></i><span class="ico cal"><svg width="13" height="15" viewBox="0 0 13 15"><rect x="0" y="0" width="13" height="14.800" rx="1" fill="url(#cg)"/><path d="M0 1c0-.6.400-1 1-1h11c.6 0 1 .4 1 1v3.800H0z" fill="#b9414f"/><rect x="2.600" y=".3" width="1.200" height="1.200" fill="#f3d9dc"/><rect x="9.200" y=".3" width="1.200" height="1.200" fill="#f3d9dc"/><text x="6.500" y="11.600" font-family="Liberation Sans, sans-serif" font-size="7.600" font-weight="bold" text-anchor="middle" fill="#4d5257">17</text></svg></span><span class="ico clk"><svg width="13" height="13" viewBox="0 0 13 13"><circle cx="2.400" cy="2.300" r="2.100" fill="#cb3f4e"/><circle cx="10.600" cy="2.300" r="2.100" fill="#cb3f4e"/><path d="M6.500 .4v1.500" stroke="#a93341" stroke-width=".9"/><path d="M2.800 11.300l-1 1.300M10.200 11.300l1 1.300" stroke="#a93341" stroke-width="1" stroke-linecap="round"/><circle cx="6.500" cy="7.200" r="5.600" fill="#c4404e"/><circle cx="6.500" cy="7.200" r="4.300" fill="#ebebe9"/><path d="M4.600 5.600l1.900 1.700 2.300-1.900" fill="none" stroke="#8d9096" stroke-width=".9" stroke-linecap="round" stroke-linejoin="round"/></svg></span></div>
<div class="row alt last" style="top:1026.0px"><i class="cb"></i><span class="th"><svg width="50" height="50" viewBox="0 0 50 50"><rect width="50" height="50" fill="#ffffff"/><circle cx="36" cy="13" r="10.600" fill="none" stroke="#ececec" stroke-width=".6"/><circle cx="38.200" cy="37.500" r="11.200" fill="none" stroke="#ececec" stroke-width=".6"/><path d="M4.300 21.500V16c0-4.200 3-7.300 6.700-7.300s6.700 3.100 6.700 7.300v5.500" fill="none" stroke="#6f6f6f" stroke-width="1.100"/><path d="M5.500 22.200h12" stroke="#e7a3a3" stroke-width=".8"/><path d="M7 26.300h17l3-3.500" fill="none" stroke="#dcdcdc" stroke-width=".6"/><rect x="3.100" y="21.300" width="2.500" height="8.800" rx=".6" fill="#1c1c1c"/><rect x="17.100" y="21" width="1.900" height="16.800" fill="#1a1a1a"/><path d="M16.700 37.500h2.500l.6 8.600h-3.700z" fill="#9c9687"/><rect x="16.900" y="37" width="2.300" height="3.600" fill="#3a3a3a"/><rect x="19" y="37.200" width="6" height="1.900" fill="#8e8e8e"/><rect x="22.800" y="32.700" width="1" height="4.800" fill="#8a8a8a"/><rect x="19.500" y="41.800" width="5.500" height=".8" fill="#cfcabf"/><rect x="33.200" y="2.600" width="6.100" height="20.600" rx=".8" fill="#161616"/><rect x="32.800" y="2.300" width="6.900" height="1.300" fill="#0c0c0c"/><rect x="36.400" y="4" width=".9" height="6" fill="#444"/><rect x="35.100" y="26.300" width="1.600" height="4.600" fill="#141414"/><path d="M34.400 30.600h3.800l.4 15.900h-4.600z" fill="#b7a595"/><rect x="35.900" y="33" width=".8" height="13" fill="#8d7c6d"/><path d="M35 34.200l8.500 2.500-.5 1.900-8.300-2.300z" fill="#121212"/><rect x="43" y="28.400" width="1.500" height="7.600" fill="#b9bcc0"/><path d="M43 36.400h2.400v3.600c0 .6-.6.900-1.200.7l-1.200-.5z" fill="#c6c9cc"/></svg></span><i class="badge g"></i><span class="ico cal"><svg width="13" height="15" viewBox="0 0 13 15"><rect x="0" y="0" width="13" height="14.800" rx="1" fill="url(#cg)"/><path d="M0 1c0-.6.400-1 1-1h11c.6 0 1 .4 1 1v3.800H0z" fill="#b9414f"/><rect x="2.600" y=".3" width="1.200" height="1.200" fill="#f3d9dc"/><rect x="9.200" y=".3" width="1.200" height="1.200" fill="#f3d9dc"/><text x="6.500" y="11.600" font-family="Liberation Sans, sans-serif" font-size="7.600" font-weight="bold" text-anchor="middle" fill="#4d5257">17</text></svg></span><span class="ico clk"><svg width="13" height="13" viewBox="0 0 13 13"><circle cx="2.400" cy="2.300" r="2.100" fill="#cb3f4e"/><circle cx="10.600" cy="2.300" r="2.100" fill="#cb3f4e"/><path d="M6.500 .4v1.500" stroke="#a93341" stroke-width=".9"/><path d="M2.800 11.300l-1 1.300M10.200 11.300l1 1.300" stroke="#a93341" stroke-width="1" stroke-linecap="round"/><circle cx="6.500" cy="7.200" r="5.600" fill="#c4404e"/><circle cx="6.500" cy="7.200" r="4.300" fill="#ebebe9"/><path d="M4.600 5.600l1.900 1.700 2.300-1.900" fill="none" stroke="#8d9096" stroke-width=".9" stroke-linecap="round" stroke-linejoin="round"/></svg></span></div>
<div class="thead foot" style="top:1121px"><i class="hcb"></i><i class="vs" style="left:33px"></i><i class="vs" style="left:103px"></i><i class="vs" style="left:253px"></i><i class="vs" style="left:994px"></i><i class="vs" style="left:1144px"></i><i class="vs" style="left:1294px"></i><svg width="12" height="8" viewBox="0 0 12 8" style="position:absolute;left:233px;top:15px"><path d="M1.200 1.300L6 6.100l4.800-4.800" fill="none" stroke="#7cc0f6" stroke-width="1.500" stroke-linecap="round" stroke-linejoin="round"/></svg><svg width="12" height="8" viewBox="0 0 12 8" style="position:absolute;left:974px;top:15px"><path d="M1.200 1.300L6 6.100l4.800-4.800" fill="none" stroke="#7cc0f6" stroke-width="1.500" stroke-linecap="round" stroke-linejoin="round"/></svg><svg width="12" height="8" viewBox="0 0 12 8" style="position:absolute;left:1124px;top:15px"><path d="M1.200 1.300L6 6.100l4.800-4.800" fill="none" stroke="#7cc0f6" stroke-width="1.500" stroke-linecap="round" stroke-linejoin="round"/></svg><svg width="12" height="8" viewBox="0 0 12 8" style="position:absolute;left:1274px;top:15px"><path d="M1.200 1.300L6 6.100l4.800-4.800" fill="none" stroke="#ffffff" stroke-width="1.500" stroke-linecap="round" stroke-linejoin="round"/></svg><svg width="12" height="8" viewBox="0 0 12 8" style="position:absolute;left:1524px;top:15px"><path d="M1.200 1.300L6 6.100l4.800-4.800" fill="none" stroke="#7cc0f6" stroke-width="1.500" stroke-linecap="round" stroke-linejoin="round"/></svg></div>
<div class="pp"><svg width="12" height="8" viewBox="0 0 12 8" style="position:absolute;left:105px;top:11px"><path d="M1.200 1.300L6 6.100l4.800-4.800" fill="none" stroke="#2c3338" stroke-width="1.350" stroke-linecap="round" stroke-linejoin="round"/></svg></div>
<span class="t b w" style="top:32px;line-height:15px;height:15px;left:63.4px;transform:scaleX(0.9460);transform-origin:left center;">Scan</span>
<span class="t blk" style="top:32px;line-height:15px;height:15px;left:128.4px;letter-spacing:0.278px;">Media Library</span>
<span class="t b w" style="top:32px;line-height:15px;height:15px;left:1326.5px;letter-spacing:-0.406px;">Recover All</span>
<span class="t b w" style="top:32px;line-height:15px;height:15px;left:1458.0px;letter-spacing:-0.243px;">Empty Trash</span>
<span class="t " style="top:79px;line-height:15px;height:15px;left:13.5px;letter-spacing:0.041px;">There are</span>
<span class="t b dk3" style="top:79px;line-height:15px;height:15px;left:75.1px;letter-spacing:-0.032px;">0 issue</span>
<span class="t " style="top:79px;line-height:15px;height:15px;left:123.5px;letter-spacing:0.352px;">with your files, accounting for</span>
<span class="t b dk3" style="top:79px;line-height:15px;height:15px;left:306.5px;letter-spacing:0.427px;">0.00 MB</span>
<span class="t " style="top:79px;line-height:15px;height:15px;left:359.8px;letter-spacing:0.209px;">. Your trash contains</span>
<span class="t b dk3" style="top:79px;line-height:15px;height:15px;left:486.9px;letter-spacing:0.046px;">71.54 MB</span>
<span class="t " style="top:79px;line-height:15px;height:15px;left:545.2px;">.</span>
<span class="t lnk" style="top:117px;line-height:15px;height:15px;left:13.0px;letter-spacing:0.084px;">Issues</span>
<span class="t mut" style="top:117px;line-height:15px;height:15px;left:56.0px;letter-spacing:0.305px;">(0)</span>
<span class="t pipe" style="top:117px;line-height:15px;height:15px;left:76.8px;">|</span>
<span class="t lnk" style="top:117px;line-height:15px;height:15px;left:84.5px;letter-spacing:0.234px;">Ignored</span>
<span class="t mut" style="top:117px;line-height:15px;height:15px;left:135.6px;letter-spacing:0.305px;">(0)</span>
<span class="t b dk" style="top:117px;line-height:15px;height:15px;left:164.5px;letter-spacing:0.128px;">Trash</span>
<span class="t mut" style="top:117px;line-height:15px;height:15px;left:205.0px;letter-spacing:0.410px;">(328)</span>
<span class="t pipe" style="top:117px;line-height:15px;height:15px;left:242.3px;">|</span>
<span class="t lnk" style="top:117px;line-height:15px;height:15px;left:249.7px;letter-spacing:0.129px;">Found In Use Medias</span>
<span class="t mut" style="top:117px;line-height:15px;height:15px;left:380.7px;letter-spacing:0.584px;">(2008)</span>
<span class="t m w" style="top:117px;line-height:15px;height:15px;left:1447.2px;letter-spacing:0.062px;">1/33</span>
<span class="t dk2" style="top:117px;line-height:15px;height:15px;left:1279.2px;letter-spacing:0.361px;">328 results</span>
<span class="t m w" style="top:1175px;line-height:15px;height:15px;left:1447.2px;letter-spacing:0.062px;">1/33</span>
<span class="t dk2" style="top:1175px;line-height:15px;height:15px;left:1279.2px;letter-spacing:0.361px;">328 results</span>
<span class="t b w" style="top:161px;line-height:15px;height:15px;left:122.4px;transform:scaleX(0.9404);transform-origin:left center;">Origin</span>
<span class="t b w" style="top:161px;line-height:15px;height:15px;left:272.3px;letter-spacing:-0.116px;">Title &amp; Path</span>
<span class="t b w" style="top:161px;line-height:15px;height:15px;left:1013.2px;transform:scaleX(0.9474);transform-origin:left center;">Issue</span>
<span class="t b w" style="top:161px;line-height:15px;height:15px;left:1163.2px;letter-spacing:-0.339px;">Size</span>
<span class="t b w" style="top:161px;line-height:15px;height:15px;left:1313.2px;letter-spacing:-0.035px;">Deleted At</span>
<span class="t lnk" style="top:226px;line-height:15px;height:15px;left:122.4px;letter-spacing:0.433px;">ID 26454</span>
<span class="t lnk" style="top:217px;line-height:15px;height:15px;left:272.5px;letter-spacing:0.228px;">Avatar-2</span>
<span class="t dk" style="top:235px;line-height:15px;height:15px;left:272.5px;letter-spacing:0.219px;">2020/11/Avatar-2.png (+ 10 files)</span>
<span class="t dk2" style="top:226px;line-height:15px;height:15px;left:1013.2px;letter-spacing:0.407px;">Not found in content</span>
<span class="t ot" style="top:226px;line-height:15px;height:15px;left:1167.4px;letter-spacing:-0.083px;">1072.95</span>
<span class="t b ot" style="top:226px;line-height:15px;height:15px;left:1219.3px;transform:scaleX(0.8892);transform-origin:left center;">KB</span>
<span class="t lab" style="top:215px;line-height:12px;height:12px;left:1345.7px;font-size:10.5px;letter-spacing:0.038px;">Date</span>
<span class="t lab" style="top:215px;line-height:12px;height:12px;left:1513.2px;font-size:10.5px;letter-spacing:0.016px;">Time</span>
<span class="t m dk" style="top:238px;line-height:15px;height:15px;left:1329.2px;letter-spacing:0.453px;">11/6/2025</span>
<span class="t m dk" style="top:238px;line-height:15px;height:15px;right:49.3px;letter-spacing:0.370px;margin-right:-0.370px;">10:06:21 AM</span>
<span class="t lnk" style="top:319px;line-height:15px;height:15px;left:122.4px;letter-spacing:0.433px;">ID 26618</span>
<span class="t lnk" style="top:310px;line-height:15px;height:15px;left:272.5px;letter-spacing:0.423px;">dao-seki</span>
<span class="t dk" style="top:328px;line-height:15px;height:15px;left:272.5px;letter-spacing:0.335px;">2020/11/dao-seki.png (+ 9 files)</span>
<span class="t dk2" style="top:319px;line-height:15px;height:15px;left:1013.2px;letter-spacing:0.407px;">Not found in content</span>
<span class="t gt" style="top:319px;line-height:15px;height:15px;left:1167.4px;letter-spacing:0.347px;">999.73</span>
<span class="t b gt" style="top:319px;line-height:15px;height:15px;left:1214.3px;transform:scaleX(0.8892);transform-origin:left center;">KB</span>
<span class="t lab" style="top:308px;line-height:12px;height:12px;left:1345.7px;font-size:10.5px;letter-spacing:0.038px;">Date</span>
<span class="t lab" style="top:308px;line-height:12px;height:12px;left:1513.2px;font-size:10.5px;letter-spacing:0.016px;">Time</span>
<span class="t m dk" style="top:332px;line-height:15px;height:15px;left:1329.2px;letter-spacing:0.453px;">11/6/2025</span>
<span class="t m dk" style="top:332px;line-height:15px;height:15px;right:49.3px;letter-spacing:0.500px;margin-right:-0.500px;">10:06:22 AM</span>
<span class="t lnk" style="top:412px;line-height:15px;height:15px;left:122.4px;letter-spacing:0.433px;">ID 26625</span>
<span class="t lnk" style="top:403px;line-height:15px;height:15px;left:272.5px;letter-spacing:0.385px;">Chao-Chong-Dinh-Fivestar</span>
<span class="t dk" style="top:422px;line-height:15px;height:15px;left:272.5px;letter-spacing:0.301px;">2020/11/Chao-Chong-Dinh-Fivestar.png (+ 10 files)</span>
<span class="t dk2" style="top:412px;line-height:15px;height:15px;left:1013.2px;letter-spacing:0.407px;">Not found in content</span>
<span class="t gt" style="top:412px;line-height:15px;height:15px;left:1167.4px;letter-spacing:0.387px;">958.20</span>
<span class="t b gt" style="top:412px;line-height:15px;height:15px;left:1214.8px;transform:scaleX(0.8892);transform-origin:left center;">KB</span>
<span class="t lab" style="top:401px;line-height:12px;height:12px;left:1345.7px;font-size:10.5px;letter-spacing:0.038px;">Date</span>
<span class="t lab" style="top:401px;line-height:12px;height:12px;left:1513.2px;font-size:10.5px;letter-spacing:0.016px;">Time</span>
<span class="t m dk" style="top:425px;line-height:15px;height:15px;left:1329.2px;letter-spacing:0.453px;">11/6/2025</span>
<span class="t m dk" style="top:425px;line-height:15px;height:15px;right:49.3px;letter-spacing:0.500px;margin-right:-0.500px;">10:06:23 AM</span>
<span class="t lnk" style="top:506px;line-height:15px;height:15px;left:122.4px;letter-spacing:0.433px;">ID 26617</span>
<span class="t lnk" style="top:497px;line-height:15px;height:15px;left:272.5px;letter-spacing:0.521px;">Bep-dien-tu-Sumika-SM289-1</span>
<span class="t dk" style="top:515px;line-height:15px;height:15px;left:272.5px;letter-spacing:0.370px;">2020/11/Bep-dien-tu-Sumika-SM289-1.png (+ 10 files)</span>
<span class="t dk2" style="top:506px;line-height:15px;height:15px;left:1013.2px;letter-spacing:0.407px;">Not found in content</span>
<span class="t gt" style="top:506px;line-height:15px;height:15px;left:1167.4px;letter-spacing:0.387px;">890.52</span>
<span class="t b gt" style="top:506px;line-height:15px;height:15px;left:1214.8px;transform:scaleX(0.8892);transform-origin:left center;">KB</span>
<span class="t lab" style="top:495px;line-height:12px;height:12px;left:1345.7px;font-size:10.5px;letter-spacing:0.038px;">Date</span>
<span class="t lab" style="top:495px;line-height:12px;height:12px;left:1513.2px;font-size:10.5px;letter-spacing:0.016px;">Time</span>
<span class="t m dk" style="top:518px;line-height:15px;height:15px;left:1329.2px;letter-spacing:0.453px;">11/6/2025</span>
<span class="t m dk" style="top:518px;line-height:15px;height:15px;right:49.3px;letter-spacing:0.500px;margin-right:-0.500px;">10:06:22 AM</span>
<span class="t lnk" style="top:599px;line-height:15px;height:15px;left:122.4px;letter-spacing:0.433px;">ID 26677</span>
<span class="t lnk" style="top:590px;line-height:15px;height:15px;left:272.5px;letter-spacing:0.525px;">Combo-bep-tu-doi-spelier-SPM528IPlus-3</span>
<span class="t dk" style="top:608px;line-height:15px;height:15px;left:272.5px;letter-spacing:0.411px;">2021/06/Combo-bep-tu-doi-spelier-SPM528IPlus-3.jpg (+ 11 files)</span>
<span class="t dk2" style="top:599px;line-height:15px;height:15px;left:1013.2px;letter-spacing:0.407px;">Not found in content</span>
<span class="t gt" style="top:599px;line-height:15px;height:15px;left:1167.4px;letter-spacing:0.127px;">714.09</span>
<span class="t b gt" style="top:599px;line-height:15px;height:15px;left:1211.9px;transform:scaleX(0.8892);transform-origin:left center;">KB</span>
<span class="t lab" style="top:588px;line-height:12px;height:12px;left:1345.7px;font-size:10.5px;letter-spacing:0.038px;">Date</span>
<span class="t lab" style="top:588px;line-height:12px;height:12px;left:1513.2px;font-size:10.5px;letter-spacing:0.016px;">Time</span>
<span class="t m dk" style="top:612px;line-height:15px;height:15px;left:1329.2px;letter-spacing:0.453px;">11/6/2025</span>
<span class="t m dk" style="top:612px;line-height:15px;height:15px;right:49.3px;letter-spacing:0.500px;margin-right:-0.500px;">10:06:23 AM</span>
<span class="t lnk" style="top:692px;line-height:15px;height:15px;left:122.4px;letter-spacing:0.433px;">ID 26680</span>
<span class="t lnk" style="top:683px;line-height:15px;height:15px;left:272.5px;letter-spacing:0.466px;">Combo-bep-tu-spelier-SPE–IC-1088-2</span>
<span class="t dk" style="top:702px;line-height:15px;height:15px;left:272.5px;letter-spacing:0.369px;">2021/06/Combo-bep-tu-spelier-SPE–IC-1088-2.jpg (+ 11 files)</span>
<span class="t dk2" style="top:692px;line-height:15px;height:15px;left:1013.2px;letter-spacing:0.407px;">Not found in content</span>
<span class="t gt" style="top:692px;line-height:15px;height:15px;left:1167.4px;letter-spacing:0.127px;">708.41</span>
<span class="t b gt" style="top:692px;line-height:15px;height:15px;left:1211.9px;transform:scaleX(0.8892);transform-origin:left center;">KB</span>
<span class="t lab" style="top:681px;line-height:12px;height:12px;left:1345.7px;font-size:10.5px;letter-spacing:0.038px;">Date</span>
<span class="t lab" style="top:681px;line-height:12px;height:12px;left:1513.2px;font-size:10.5px;letter-spacing:0.016px;">Time</span>
<span class="t m dk" style="top:705px;line-height:15px;height:15px;left:1329.2px;letter-spacing:0.453px;">11/6/2025</span>
<span class="t m dk" style="top:705px;line-height:15px;height:15px;right:49.3px;letter-spacing:0.500px;margin-right:-0.500px;">10:06:23 AM</span>
<span class="t lnk" style="top:786px;line-height:15px;height:15px;left:122.4px;letter-spacing:0.433px;">ID 26678</span>
<span class="t lnk" style="top:777px;line-height:15px;height:15px;left:272.5px;letter-spacing:0.598px;">Combo-bep-tu-doi-spelier-SPM968I-3</span>
<span class="t dk" style="top:795px;line-height:15px;height:15px;left:272.5px;letter-spacing:0.444px;">2021/06/Combo-bep-tu-doi-spelier-SPM968I-3.jpg (+ 11 files)</span>
<span class="t dk2" style="top:786px;line-height:15px;height:15px;left:1013.2px;letter-spacing:0.407px;">Not found in content</span>
<span class="t gt" style="top:786px;line-height:15px;height:15px;left:1167.4px;letter-spacing:0.127px;">707.38</span>
<span class="t b gt" style="top:786px;line-height:15px;height:15px;left:1211.9px;transform:scaleX(0.8892);transform-origin:left center;">KB</span>
<span class="t lab" style="top:775px;line-height:12px;height:12px;left:1345.7px;font-size:10.5px;letter-spacing:0.038px;">Date</span>
<span class="t lab" style="top:775px;line-height:12px;height:12px;left:1513.2px;font-size:10.5px;letter-spacing:0.016px;">Time</span>
<span class="t m dk" style="top:798px;line-height:15px;height:15px;left:1329.2px;letter-spacing:0.453px;">11/6/2025</span>
<span class="t m dk" style="top:798px;line-height:15px;height:15px;right:49.3px;letter-spacing:0.500px;margin-right:-0.500px;">10:06:23 AM</span>
<span class="t lnk" style="top:879px;line-height:15px;height:15px;left:122.4px;letter-spacing:0.433px;">ID 26915</span>
<span class="t lnk" style="top:870px;line-height:15px;height:15px;left:272.5px;letter-spacing:0.163px;">BN_SPE_vuong-1-resize</span>
<span class="t dk" style="top:888px;line-height:15px;height:15px;left:272.5px;letter-spacing:0.233px;">2022/07/BN_SPE_vuong-1-resize.jpeg (+ 12 files)</span>
<span class="t dk2" style="top:879px;line-height:15px;height:15px;left:1013.2px;letter-spacing:0.407px;">Not found in content</span>
<span class="t gt" style="top:879px;line-height:15px;height:15px;left:1167.4px;letter-spacing:0.307px;">706.24</span>
<span class="t b gt" style="top:879px;line-height:15px;height:15px;left:1213.8px;transform:scaleX(0.8892);transform-origin:left center;">KB</span>
<span class="t lab" style="top:868px;line-height:12px;height:12px;left:1345.7px;font-size:10.5px;letter-spacing:0.038px;">Date</span>
<span class="t lab" style="top:868px;line-height:12px;height:12px;left:1513.2px;font-size:10.5px;letter-spacing:0.016px;">Time</span>
<span class="t m dk" style="top:892px;line-height:15px;height:15px;left:1329.2px;letter-spacing:0.453px;">11/6/2025</span>
<span class="t m dk" style="top:892px;line-height:15px;height:15px;right:49.3px;letter-spacing:0.500px;margin-right:-0.500px;">10:06:23 AM</span>
<span class="t lnk" style="top:972px;line-height:15px;height:15px;left:122.4px;letter-spacing:0.433px;">ID 27467</span>
<span class="t lnk" style="top:963px;line-height:15px;height:15px;left:272.5px;letter-spacing:0.986px;">i-2388-03-600×600-600×600</span>
<span class="t dk" style="top:982px;line-height:15px;height:15px;left:272.5px;letter-spacing:0.638px;">2025/11/i-2388-03-600x600-600x600-2.png (+ 9 files)</span>
<span class="t dk2" style="top:972px;line-height:15px;height:15px;left:1013.2px;letter-spacing:0.407px;">Not found in content</span>
<span class="t gt" style="top:972px;line-height:15px;height:15px;left:1167.4px;letter-spacing:0.187px;">687.26</span>
<span class="t b gt" style="top:972px;line-height:15px;height:15px;left:1213.2px;transform:scaleX(0.8892);transform-origin:left center;">KB</span>
<span class="t lab" style="top:961px;line-height:12px;height:12px;left:1345.7px;font-size:10.5px;letter-spacing:0.038px;">Date</span>
<span class="t lab" style="top:961px;line-height:12px;height:12px;left:1513.2px;font-size:10.5px;letter-spacing:0.016px;">Time</span>
<span class="t m dk" style="top:985px;line-height:15px;height:15px;left:1329.2px;letter-spacing:0.453px;">11/6/2025</span>
<span class="t m dk" style="top:985px;line-height:15px;height:15px;right:49.3px;letter-spacing:0.500px;margin-right:-0.500px;">10:06:29 AM</span>
<span class="t lnk" style="top:1066px;line-height:15px;height:15px;left:122.4px;letter-spacing:0.433px;">ID 27329</span>
<span class="t lnk" style="top:1057px;line-height:15px;height:15px;left:272.5px;letter-spacing:0.986px;">i-2388-03-600×600-600×600</span>
<span class="t dk" style="top:1075px;line-height:15px;height:15px;left:272.5px;letter-spacing:0.594px;">2025/11/i-2388-03-600x600-600x600-1.png (+ 9 files)</span>
<span class="t dk2" style="top:1066px;line-height:15px;height:15px;left:1013.2px;letter-spacing:0.407px;">Not found in content</span>
<span class="t gt" style="top:1066px;line-height:15px;height:15px;left:1167.4px;letter-spacing:0.187px;">687.26</span>
<span class="t b gt" style="top:1066px;line-height:15px;height:15px;left:1213.2px;transform:scaleX(0.8892);transform-origin:left center;">KB</span>
<span class="t lab" style="top:1055px;line-height:12px;height:12px;left:1345.7px;font-size:10.5px;letter-spacing:0.038px;">Date</span>
<span class="t lab" style="top:1055px;line-height:12px;height:12px;left:1513.2px;font-size:10.5px;letter-spacing:0.016px;">Time</span>
<span class="t m dk" style="top:1078px;line-height:15px;height:15px;left:1329.2px;letter-spacing:0.453px;">11/6/2025</span>
<span class="t m dk" style="top:1078px;line-height:15px;height:15px;right:49.3px;letter-spacing:0.500px;margin-right:-0.500px;">10:06:24 AM</span>
<span class="t b w" style="top:1132px;line-height:15px;height:15px;left:122.4px;transform:scaleX(0.9404);transform-origin:left center;">Origin</span>
<span class="t b w" style="top:1132px;line-height:15px;height:15px;left:272.3px;letter-spacing:-0.116px;">Title &amp; Path</span>
<span class="t b w" style="top:1132px;line-height:15px;height:15px;left:1013.2px;transform:scaleX(0.9474);transform-origin:left center;">Issue</span>
<span class="t b w" style="top:1132px;line-height:15px;height:15px;left:1163.2px;letter-spacing:-0.339px;">Size</span>
<span class="t b w" style="top:1132px;line-height:15px;height:15px;left:1313.2px;letter-spacing:-0.035px;">Deleted At</span>
<span class="t blk" style="top:1175px;line-height:15px;height:15px;left:24.4px;letter-spacing:0.186px;">10 items / page</span>
</div>
</body></html>
